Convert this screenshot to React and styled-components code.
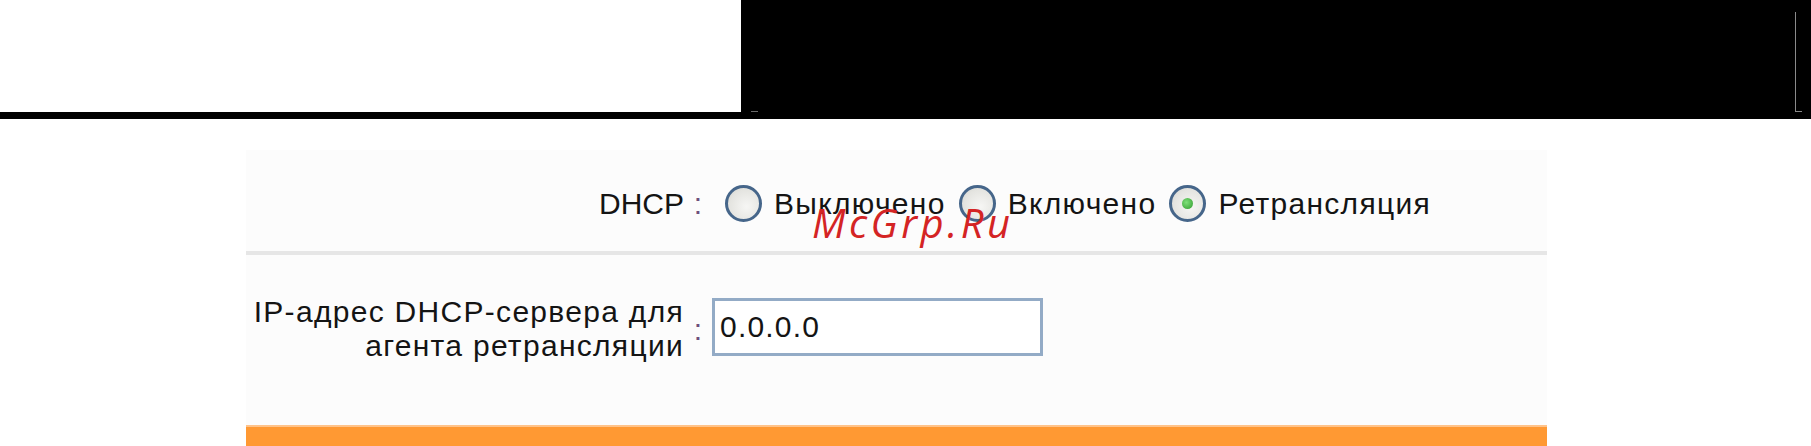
import React from "react";
import styled, { createGlobalStyle } from "styled-components";

const Global = createGlobalStyle`
  html, body { margin: 0; padding: 0; background: #ffffff; }
  body { font-family: "Liberation Sans", Arial, sans-serif; overflow: hidden; }
`;

const Header = styled.header`
  display: flex;
  height: 112px;
`;

const HeaderBlank = styled.div`
  width: 741px;
  background: #ffffff;
`;

const HeaderDark = styled.div`
  flex: 1;
  background: #000000;
  display: flex;
  align-items: flex-end;
  justify-content: space-between;
`;

const Dash = styled.span`
  width: 7px;
  height: 1px;
  margin-left: 10px;
  background: #6b6b6b;
`;

const Frame = styled.span`
  width: 7px;
  height: 100px;
  margin-right: 9px;
  border-left: 1px solid #8a8a8a;
  border-bottom: 1px solid #8a8a8a;
  box-sizing: border-box;
`;

const Rule = styled.div`
  height: 7px;
  background: #000000;
`;

const Panel = styled.main`
  position: relative;
  margin: 31px 0 0 246px;
  width: 1301px;
  background: #fcfcfc;
`;

const Row = styled.section`
  display: grid;
  grid-template-columns: 438px 28px 1fr;
  align-items: ${(p) => p.$align || "center"};
  height: ${(p) => p.$h}px;
  padding-top: ${(p) => p.$pt || 0}px;
  box-sizing: border-box;
`;

const Label = styled.div`
  text-align: right;
  font-size: 30px;
  letter-spacing: ${(p) => (p.$tight ? "0" : "1.3px")};
  line-height: 34px;
  color: #141414;
  padding-top: ${(p) => p.$pt || 0}px;
`;

const Colon = styled.div`
  text-align: center;
  font-size: 30px;
  line-height: 34px;
  color: #6e4f7c;
  padding-top: ${(p) => p.$pt || 0}px;
`;

const Options = styled.div`
  display: flex;
  align-items: center;
  padding-left: 13px;
`;

const Option = styled.label`
  display: flex;
  align-items: center;
  gap: 12px;
  margin-right: 13px;
  font-size: 30px;
  letter-spacing: 1.3px;
  color: #141414;
`;

const Radio = styled.span`
  width: 37px;
  height: 37px;
  box-sizing: border-box;
  border-radius: 50%;
  border: 3px solid #46668a;
  background: radial-gradient(circle at 60% 60%, #f6f6f4 0%, #e4e4e0 65%, #cfcfca 100%);
  display: flex;
  align-items: center;
  justify-content: center;
  flex-shrink: 0;
  &::after {
    content: "";
    width: 11px;
    height: 11px;
    border-radius: 50%;
    background: radial-gradient(circle at 40% 40%, #7fe07a, #2f9a2c);
    display: ${(p) => (p.$checked ? "block" : "none")};
  }
`;

const Separator = styled.hr`
  margin: 0;
  border: none;
  height: 4px;
  background: #e6e6e6;
`;

const FieldCell = styled.div`
  padding-top: ${(p) => p.$pt || 0}px;
`;

const Field = styled.input`
  display: block;
  width: 331px;
  height: 58px;
  box-sizing: border-box;
  border: 3px solid #93abc6;
  background: #ffffff;
  font-family: "Liberation Sans", Arial, sans-serif;
  font-size: 30px;
  letter-spacing: 1.2px;
  color: #141414;
  padding: 0 5px;
  outline: none;
`;

const OrangeBar = styled.footer`
  height: 40px;
  background: #ff9933;
  border-top: 2px solid #ffc38a;
`;

const Watermark = styled.div`
  position: absolute;
  left: 566px;
  top: 45px;
  font-family: "Open Sans", "DejaVu Sans", sans-serif;
  font-style: italic;
  font-size: 40px;
  letter-spacing: 3.5px;
  color: #d42424;
  pointer-events: none;
`;

const options = [
  { label: "Выключено", checked: false },
  { label: "Включено", checked: false },
  { label: "Ретрансляция", checked: true },
];

export default function App() {
  return (
    <>
      <Global />
      <Header>
        <HeaderBlank />
        <HeaderDark>
          <Dash />
          <Frame />
        </HeaderDark>
      </Header>
      <Rule />
      <Panel>
        <Row $h={101} $pt={6}>
          <Label $tight>DHCP</Label>
          <Colon>:</Colon>
          <Options>
            {options.map((o) => (
              <Option key={o.label}>
                <Radio $checked={o.checked} />
                {o.label}
              </Option>
            ))}
          </Options>
        </Row>
        <Separator />
        <Row $h={170} $align="start">
          <Label $pt={40}>
            IP-адрес DHCP-сервера для
            <br />
            агента ретрансляции
          </Label>
          <Colon $pt={58}>:</Colon>
          <FieldCell $pt={43}>
            <Field defaultValue="0.0.0.0" />
          </FieldCell>
        </Row>
        <OrangeBar />
        <Watermark>McGrp.Ru</Watermark>
      </Panel>
    </>
  );
}
